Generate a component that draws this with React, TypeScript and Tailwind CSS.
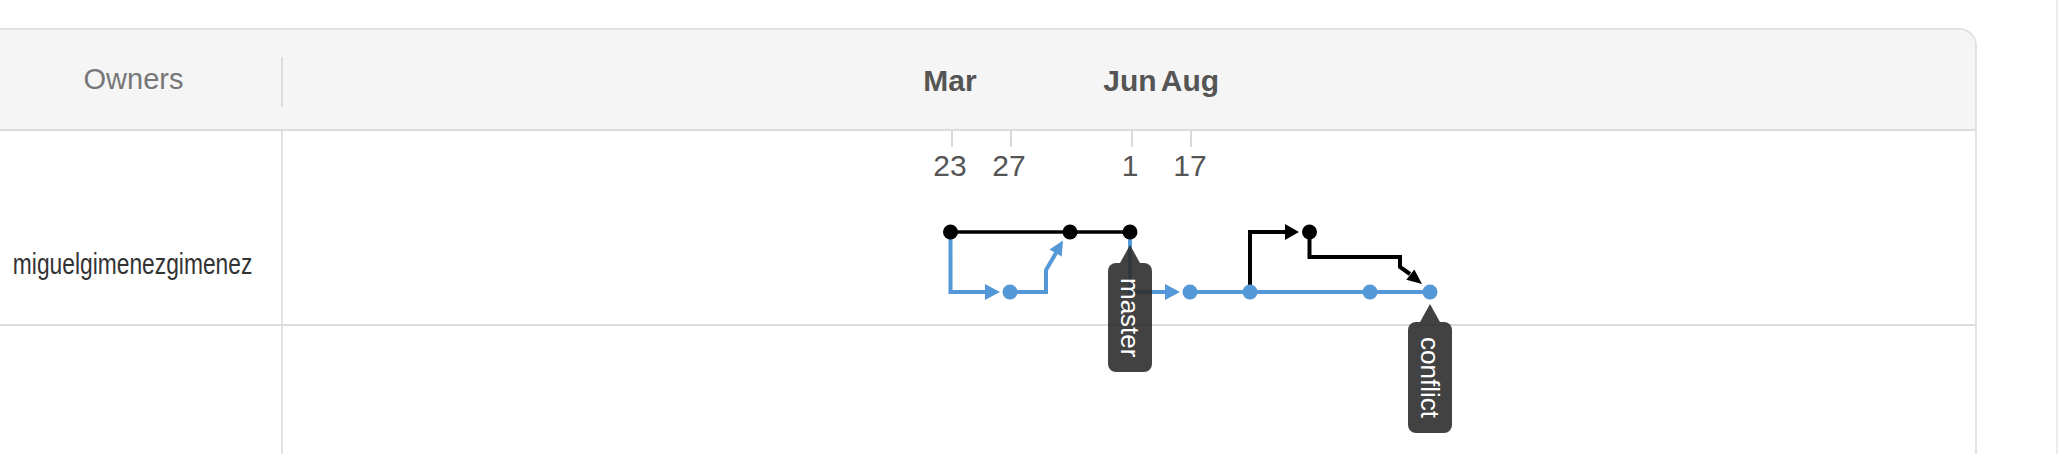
import React from "react";

const BLUE = "#5598d8";

function Tooltip({ label, className }: { label: string; className: string }) {
  return (
    <div className={`absolute flex flex-col items-center w-[44px] opacity-90 ${className}`}>
      <div className="w-0 h-0 border-x-[10px] border-x-transparent border-b-[18px] border-b-[#2e2e2e]" />
      <div className="w-[44px] rounded-[8px] bg-[#2e2e2e] flex items-center justify-center py-[15px]">
        <span className="[writing-mode:vertical-rl] text-white text-[26px] leading-[26px]">{label}</span>
      </div>
    </div>
  );
}

function Tick({ className }: { className: string }) {
  return <div className={`absolute top-0 w-[2px] h-[16px] bg-[#d9d9d9] ${className}`} />;
}

export default function App() {
  return (
    <div className="w-[2058px] h-[454px] overflow-hidden bg-white flex font-['Liberation_Sans',Arial,sans-serif]">
      <div className="w-[2056px] pt-[28px]">
        <div className="w-[1977px] border-t-2 border-r-2 border-[#e2e2e6] rounded-tr-[18px] overflow-hidden">
          {/* header */}
          <div className="flex h-[101px] bg-[#f5f5f5] border-b-2 border-[#dcdcdc]">
            <div className="w-[281px] flex items-center justify-center pr-[14px] text-[29px] leading-none text-[#777]">
              Owners
            </div>
            <div className="w-[2px] h-[50px] mt-[27px] bg-[#dddddd]" />
            <div className="relative flex-1 text-[30px] leading-none font-bold text-[#555]">
              <span className="absolute left-[667px] top-[36px] -translate-x-1/2">Mar</span>
              <span className="absolute left-[847px] top-[36px] -translate-x-1/2">Jun</span>
              <span className="absolute left-[907px] top-[36px] -translate-x-1/2">Aug</span>
            </div>
          </div>
          {/* row 1 */}
          <div className="flex h-[195px] border-b-2 border-[#dcdcdc]">
            <div className="w-[283px] border-r-2 border-[#e2e2e2] flex justify-center pr-[16px] pt-[118px]">
              <span className="inline-block scale-x-[0.76] text-[30px] leading-[30px] text-[#333] whitespace-nowrap">
                miguelgimenezgimenez
              </span>
            </div>
            <div className="relative flex-1">
              <Tick className="left-[668px]" />
              <Tick className="left-[727px]" />
              <Tick className="left-[848px]" />
              <Tick className="left-[907px]" />
              <div className="absolute top-[20px] left-0 text-[30px] leading-none text-[#555]">
                <span className="absolute left-[667px] -translate-x-1/2">23</span>
                <span className="absolute left-[726px] -translate-x-1/2">27</span>
                <span className="absolute left-[847px] -translate-x-1/2">1</span>
                <span className="absolute left-[907px] -translate-x-1/2">17</span>
              </div>

              <svg className="absolute left-0 top-0 overflow-visible pointer-events-none" width={1200} height={193}>
                <g transform="translate(-283 -131)">
                  <g fill="none" stroke={BLUE} strokeWidth={4}>
                    <path d="M950.5 232 V292 H987" />
                    <path d="M1010 292 H1046 V270 L1056 253" />
                    <path d="M1130 232 V292 H1167" />
                    <path d="M1190 292 H1430" />
                  </g>
                  <g fill={BLUE}>
                    <polygon points="985,284 1000,292 985,300" />
                    <polygon points="1063,240.5 1061.7,256.5 1049.5,249.6" />
                    <polygon points="1165,284 1180,292 1165,300" />
                  </g>
                  <g fill="none" stroke="#000" strokeWidth={4}>
                    <path d="M950.5 232 H1130" strokeWidth={3.5} />
                    <path d="M1250 292 V232 H1287" />
                    <path d="M1309.5 232 V257 H1400 V267 L1410 274" />
                  </g>
                  <g fill="#000">
                    <polygon points="1285,224 1299,232 1285,240" />
                    <polygon points="1422,284 1406.3,279.7 1414.3,269.5" />
                    <circle cx={950.5} cy={232} r={7.5} />
                    <circle cx={1070} cy={232} r={7.5} />
                    <circle cx={1130} cy={232} r={7.5} />
                    <circle cx={1309.5} cy={232} r={7.5} />
                  </g>
                  <g fill={BLUE}>
                    <circle cx={1010} cy={292} r={7.5} />
                    <circle cx={1190} cy={292} r={7.5} />
                    <circle cx={1250} cy={292} r={7.5} />
                    <circle cx={1370} cy={292} r={7.5} />
                    <circle cx={1430} cy={292} r={7.5} />
                  </g>
                </g>
              </svg>

              <Tooltip label="master" className="left-[825px] top-[114px]" />
              <Tooltip label="conflict" className="left-[1125px] top-[173px]" />
            </div>
          </div>
          {/* row 2 */}
          <div className="flex h-[200px]">
            <div className="w-[283px] border-r-2 border-[#e2e2e2]" />
            <div className="flex-1" />
          </div>
        </div>
      </div>
      <div className="w-[2px] bg-[#ebebeb]" />
    </div>
  );
}
